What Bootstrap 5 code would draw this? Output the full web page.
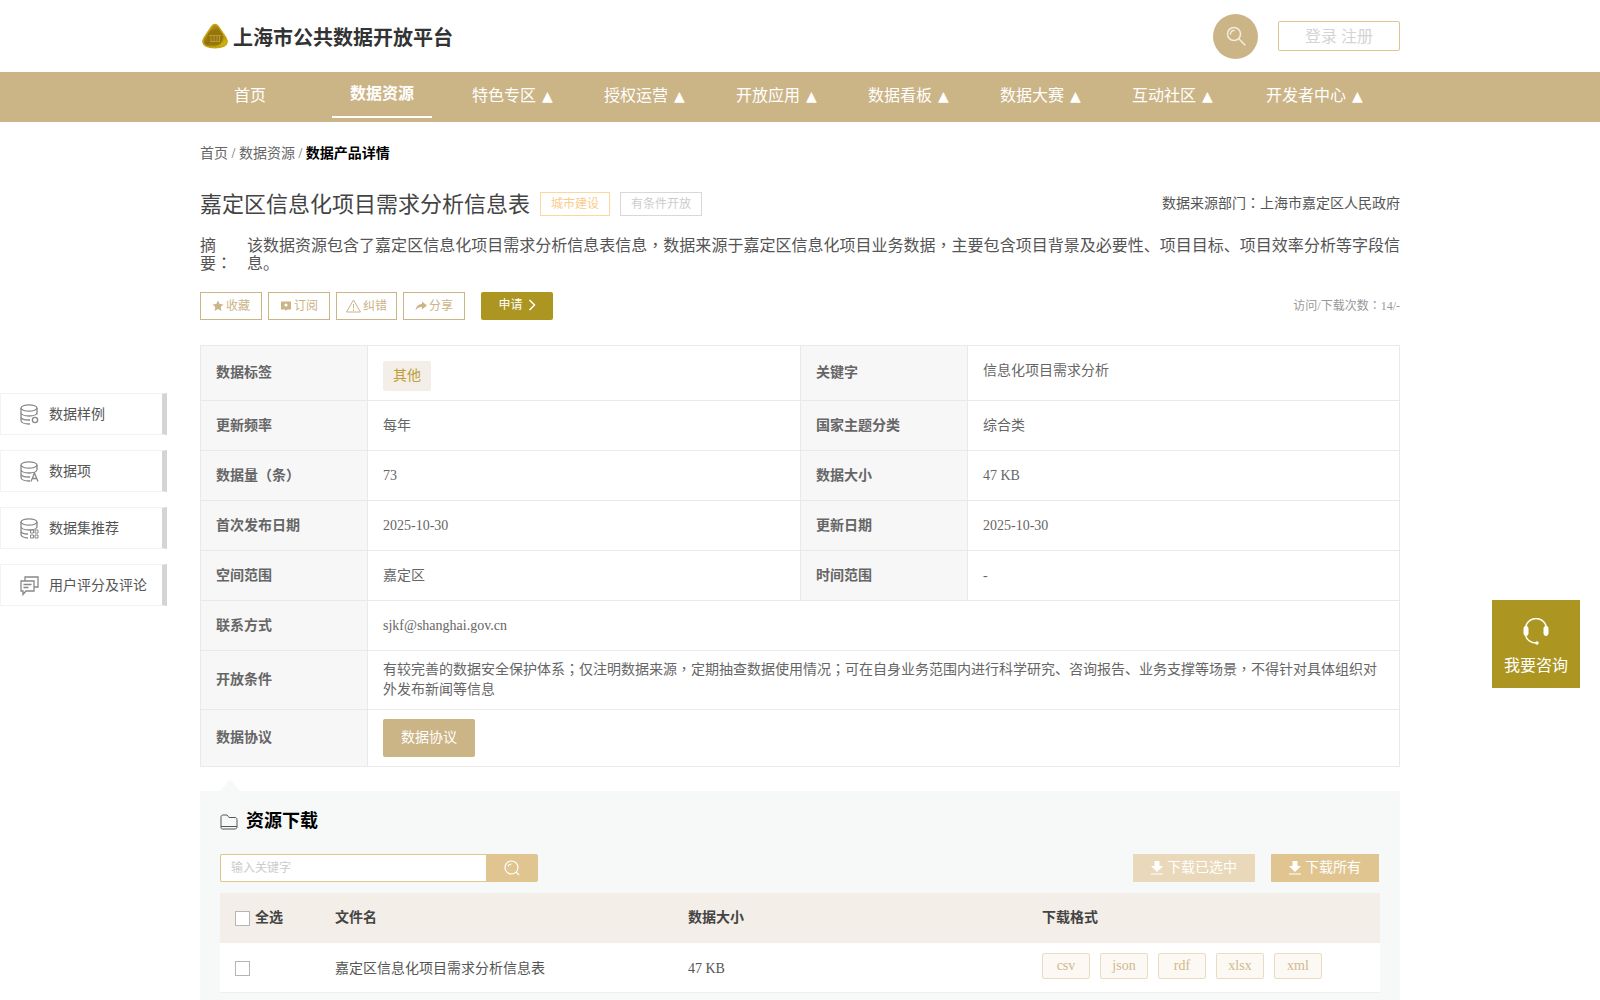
<!DOCTYPE html>
<html lang="zh">
<head>
<meta charset="utf-8">
<title>上海市公共数据开放平台</title>
<link href="https://cdn.jsdelivr.net/npm/bootstrap@5.3.0/dist/css/bootstrap.min.css" rel="stylesheet">
<style>
html,body{height:1000px;overflow:hidden}
body{font-family:"Liberation Serif","Noto Sans CJK SC",serif;font-size:14px;color:#666;background:#fff;line-height:1.4}
.pn{font-family:"Noto Sans CJK TC",serif;line-height:0}
.tri{font-family:"DejaVu Sans",sans-serif;font-size:14px;line-height:0}
.wrap-1200{width:1200px;margin:0 auto}
.top-head{height:72px}
.logo-mark{margin:0 4px 0 1px}
.brand-name{font-size:20px;font-weight:700;color:#333;padding-top:3px}
.search-disc{width:45px;height:45px;border-radius:50%;background:#cbb486}
.login-box{width:122px;height:30px;border:1px solid #e0c591;border-radius:2px;font-size:16px;color:#d4d4d4;margin-left:20px;padding-top:2px}
.main-nav{height:50px;background:#cbb486}
.main-nav .nav-cell{width:100px;margin-right:32px;height:50px;color:#fff;font-size:16px;white-space:nowrap;display:flex;align-items:center;justify-content:center;padding:0 3px 2px 0;gap:6px}
.main-nav .nav-cell.home{padding-right:0}
.main-nav .nav-cell.wide{width:120px;margin-right:0}
.main-nav .nav-cell.on{font-weight:700;border-bottom:2px solid #fff;height:46px;padding:1px 0 0}
.crumbs{padding-top:22px;height:64px;color:#666;line-height:20px}
.crumbs b{color:#000}
.title-row{height:36px}
.title-row h1{font-size:22px;font-weight:400;color:#444;margin:0;padding-top:2px}
.tag-a,.tag-b{height:24px;font-size:12px;padding:0 10px;display:flex;align-items:center;margin-left:10px}
.tag-a{border:1px solid #fdd6a0;color:#fbcb8b}
.tag-b{border:1px solid #d8d8d8;color:#ccc}
.src-dept{color:#555}
.summary{font-size:16px;line-height:18px;color:#555;margin-top:15px}
.summary .lbl{width:47px;flex:none}
.summary .txt{text-align:justify}
.act-row{margin-top:19px;height:28px}
.act-btn{width:62px;height:28px;border:1px solid #cbb486;color:#cbb486;font-size:12px;margin-right:6px;display:flex;align-items:center;justify-content:center;background:#fff;gap:2px}
.act-narrow{width:61px}
.apply-btn{width:72px;height:28px;background:#ac9621;color:#fff;font-size:12px;border-radius:2px;margin-left:10px;border:0;display:flex;align-items:center;justify-content:center;gap:5px;padding:0 0 2px}
.visit-count{font-size:12px;color:#999}
.info-tbl{width:1199px;margin:25px 0 0;border-collapse:collapse;table-layout:fixed;font-size:14px}
.info-tbl th,.info-tbl td{border:1px solid #e9e9e9;padding:0 15px;vertical-align:middle;color:#666}
.info-tbl th{background:#f7f7f7;font-weight:700}
.info-tbl td{line-height:20px}
.info-tbl td.lift{padding-bottom:4px}
.c-l{width:167px}.c-v{width:433px}.c-w{width:432px}
.h55{height:55px}.h50{height:50px}.h59{height:59px}.h57{height:57px}
.cat-chip{display:inline-block;background:#f3eee7;color:#bd9f36;border-radius:2px;padding:0 10px;line-height:30px;font-size:14px;margin-top:5px}
.proto-btn{display:inline-block;background:#cbb486;color:#fff;border-radius:2px;padding:0 18px;line-height:38px}
.dl-section{background:#f7f9f8;margin-top:24px;padding:0 20px;height:209px;position:relative}
.dl-section::before{content:"";position:absolute;left:20px;top:-12px;border:10px solid transparent;border-top:0;border-bottom:12px solid #f7f9f8}
.dl-title{height:63px;font-size:18px;font-weight:700;color:#000;gap:8px;padding-bottom:2px}
.kw-input{width:266px;height:28px;border:1px solid #e0c591;border-right:0;border-radius:2px 0 0 2px;background:#fff;color:#ccc;font-size:12px;padding-left:10px;display:flex;align-items:center}
.kw-btn{width:52px;height:28px;background:#e0c591;border-radius:0 2px 2px 0}
.dl-btn{height:28px;color:#fff;font-size:14px;display:flex;align-items:center;justify-content:center;gap:4px}
.dl-sel{width:122px;background:#e9d8b9;margin-right:16px}
.dl-all{width:108px;background:#e0c591;margin-right:1px}
.file-head,.file-row{display:grid;grid-template-columns:115px 353px 354px 1fr;align-items:center}
.file-head{height:50px;background:#f3eee7;margin-top:11px;font-weight:700;color:#444}
.file-row{height:50px;background:#fff;border-bottom:1px solid #f3eee7;color:#555}
.file-row>div:not(.fmt-set){padding-top:2px}
.fake-check{width:15px;height:15px;border:1px solid #b5b5b5;background:#fff;display:inline-block;margin-left:15px;margin-right:5px}
.fmt-set{padding-bottom:3px}
.fmt-chip{width:48px;height:26px;border:1px solid #eadcc0;background:#fcf9f4;border-radius:2px;color:#d2b88c;display:flex;align-items:center;justify-content:center;margin-right:10px}
.side-rail{position:absolute;left:0;top:393px;width:167px}
.side-item{height:42px;border:1px solid #f3f3f3;border-right:5px solid #d4d4d4;margin-bottom:15px;padding-left:19px;color:#555;gap:10px;background:#fff}
.side-item span{padding-top:2px}
.consult{position:absolute;left:1492px;top:600px;width:88px;height:88px;background:#ac9621;color:#fff;font-size:16px;padding-top:18px}
.consult-txt{margin-top:10px}
</style>
</head>
<body>
<div class="wrap-1200 top-head d-flex align-items-center justify-content-between">
  <div class="d-flex align-items-center">
    <svg class="logo-mark" width="28" height="28" viewBox="0 0 28 28"><defs><linearGradient id="g1" x1="0" y1="0" x2="1" y2="1"><stop offset="0" stop-color="#d6b01c"/><stop offset=".5" stop-color="#8d7010"/><stop offset="1" stop-color="#e8cf00"/></linearGradient></defs><path d="M14 2.500C16.500 2.500 17.500 4.500 19 7L25 16C27 19.500 26 22.500 23 24C20 25.500 17 25.700 14 25.700C11 25.700 8 25.500 5 24C2 22.500 1 19.500 3 16L9 7C10.500 4.500 11.500 2.500 14 2.500Z" fill="url(#g1)" stroke="#c9a514" stroke-width="1.500" stroke-linejoin="round"/><circle cx="14" cy="15.500" r="8" fill="#94750f"/><path d="M8 13.500H20M9 19.500H19M10 13.500V19.500M13 13.500V19.500M16 13.500V19.500M18.500 13.500V19.500" stroke="#c4a32e" fill="none" stroke-width=".8"/></svg>
    <span class="brand-name">上海市公共数据开放平台</span>
  </div>
  <div class="d-flex align-items-center">
    <div class="search-disc d-flex align-items-center justify-content-center">
      <svg width="22" height="22" viewBox="0 0 22 22" fill="none" stroke="#f4ecdc" stroke-width="1.500"><circle cx="9" cy="9" r="6.500"/><path d="M5.500 9A3.500 3.500 0 0 1 9 5.500M14 14L20 20" stroke-linecap="round"/></svg>
    </div>
    <div class="login-box d-flex align-items-center justify-content-center">登录 注册</div>
  </div>
</div>
<nav class="main-nav">
  <div class="wrap-1200 d-flex">
    <a class="nav-cell home text-decoration-none">首页</a>
    <a class="nav-cell text-decoration-none on">数据资源</a>
    <a class="nav-cell text-decoration-none">特色专区<span class="tri">▲</span></a>
    <a class="nav-cell text-decoration-none">授权运营<span class="tri">▲</span></a>
    <a class="nav-cell text-decoration-none">开放应用<span class="tri">▲</span></a>
    <a class="nav-cell text-decoration-none">数据看板<span class="tri">▲</span></a>
    <a class="nav-cell text-decoration-none">数据大赛<span class="tri">▲</span></a>
    <a class="nav-cell text-decoration-none">互动社区<span class="tri">▲</span></a>
    <a class="nav-cell text-decoration-none wide">开发者中心<span class="tri">▲</span></a>
  </div>
</nav>
<main class="wrap-1200">
  <div class="crumbs">首页 / 数据资源 / <b>数据产品详情</b></div>
  <div class="title-row d-flex align-items-center">
    <h1>嘉定区信息化项目需求分析信息表</h1>
    <span class="tag-a">城市建设</span><span class="tag-b">有条件开放</span>
    <span class="src-dept ms-auto">数据来源部门<span class="pn" lang="zh-TW">：</span>上海市嘉定区人民政府</span>
  </div>
  <div class="summary d-flex">
    <div class="lbl"><span>摘</span><span>要</span><span class="pn" lang="zh-TW">：</span></div>
    <div class="txt">该数据资源包含了嘉定区信息化项目需求分析信息表信息<span class="pn" lang="zh-TW">，</span>数据来源于嘉定区信息化项目业务数据<span class="pn" lang="zh-TW">，</span><span>主要包含项目背景及必要性、项目目标、项目效率分析等字段信</span><span>息。</span></div>
  </div>
  <div class="act-row d-flex align-items-center">
    <span class="act-btn"><svg width="12" height="12" viewBox="0 0 12 12"><path d="M6 .5L7.700 4 11.500 4.500 8.700 7.100 9.400 11 6 9.100 2.600 11 3.300 7.100 .5 4.500 4.300 4Z" fill="#cbb486"/></svg>收藏</span>
    <span class="act-btn"><svg width="12" height="12" viewBox="0 0 12 12"><path d="M1 1.500H11V9.500H7L6 11 5 9.500H1Z" fill="#cbb486"/><circle cx="6" cy="5" r="1.600" fill="#fff"/></svg>订阅</span>
    <span class="act-btn act-narrow"><svg width="15" height="14" viewBox="0 0 15 14" fill="none" stroke="#cbb486"><path d="M7.500 1L14.500 13H.5Z"/><path d="M7.500 5V9.500M7.500 10.500V12"/></svg>纠错</span>
    <span class="act-btn"><svg width="12" height="12" viewBox="0 0 12 12"><path d="M7 1.500L12 5.500 7 9.500V7C4 7 2 8 .5 10.500 1 7 3 4 7 4Z" fill="#cbb486"/></svg>分享</span>
    <button class="apply-btn">申请 <svg width="8" height="12" viewBox="0 0 8 12" fill="none" stroke="#fff" stroke-width="1.500"><path d="M1.500 1L6.500 6 1.500 11"/></svg></button>
    <span class="visit-count ms-auto">访问/下载次数<span class="pn" lang="zh-TW">：</span>14/-</span>
  </div>
  <table class="info-tbl">
    <colgroup><col class="c-l"><col class="c-v"><col class="c-l"><col class="c-w"></colgroup>
    <tr class="h55"><th>数据标签</th><td><span class="cat-chip">其他</span></td><th>关键字</th><td class="lift">信息化项目需求分析</td></tr>
    <tr class="h50"><th>更新频率</th><td>每年</td><th>国家主题分类</th><td>综合类</td></tr>
    <tr class="h50"><th>数据量（条）</th><td>73</td><th>数据大小</th><td>47 KB</td></tr>
    <tr class="h50"><th>首次发布日期</th><td>2025-10-30</td><th>更新日期</th><td>2025-10-30</td></tr>
    <tr class="h50"><th>空间范围</th><td>嘉定区</td><th>时间范围</th><td>-</td></tr>
    <tr class="h50"><th>联系方式</th><td colspan="3">sjkf@shanghai.gov.cn</td></tr>
    <tr class="h59"><th>开放条件</th><td colspan="3">有较完善的数据安全保护体系<span class="pn" lang="zh-TW">；</span>仅注明数据来源<span class="pn" lang="zh-TW">，</span>定期抽查数据使用情况<span class="pn" lang="zh-TW">；</span>可在自身业务范围内进行科学研究、咨询报告、业务支撑等场景<span class="pn" lang="zh-TW">，</span><span>不得针对具体组织对</span><span>外发布新闻等信息</span></td></tr>
    <tr class="h57"><th>数据协议</th><td colspan="3"><span class="proto-btn">数据协议</span></td></tr>
  </table>
  <section class="dl-section">
    <div class="dl-title d-flex align-items-center">
      <svg width="18" height="16" viewBox="0 0 18 16" fill="none" stroke="#555"><path d="M1 13.500V3C1 2 1.700 1 3 1H7L9 3.500H15C16.200 3.500 17 4.300 17 5.500V13C17 14.200 16.200 15 15 15H2.500C1.500 15 1 14.500 1 13.500ZM1 12.500H17"/></svg>
      <span>资源下载</span>
    </div>
    <div class="d-flex align-items-center">
      <div class="kw-input">输入关键字</div>
      <div class="kw-btn d-flex align-items-center justify-content-center"><svg width="16" height="16" viewBox="0 0 16 16" fill="none" stroke="#fff" stroke-width="1.200"><circle cx="7.500" cy="7.500" r="6.500"/><path d="M4 6.500C4.500 5 6 4 7.500 4M12 12L15 15"/></svg></div>
      <div class="dl-btn dl-sel ms-auto"><svg width="12" height="14" viewBox="0 0 12 14" fill="#fff"><path d="M3.500 0H8.500V5H12L6 11 0 5H3.500ZM0 12.500H12V13.500H0Z"/></svg>下载已选中</div>
      <div class="dl-btn dl-all"><svg width="12" height="14" viewBox="0 0 12 14" fill="#fff"><path d="M3.500 0H8.500V5H12L6 11 0 5H3.500ZM0 12.500H12V13.500H0Z"/></svg>下载所有</div>
    </div>
    <div class="file-head">
      <div class="d-flex align-items-center"><span class="fake-check"></span>全选</div>
      <div>文件名</div><div>数据大小</div><div>下载格式</div>
    </div>
    <div class="file-row">
      <div><span class="fake-check d-block"></span></div>
      <div>嘉定区信息化项目需求分析信息表</div><div>47 KB</div>
      <div class="d-flex fmt-set"><span class="fmt-chip">csv</span><span class="fmt-chip">json</span><span class="fmt-chip">rdf</span><span class="fmt-chip">xlsx</span><span class="fmt-chip">xml</span></div>
    </div>
  </section>
</main>
<aside class="side-rail">
  <div class="side-item d-flex align-items-center"><svg width="19" height="21" viewBox="0 0 19 21" fill="none" stroke="#888" stroke-width="1.300"><ellipse cx="9" cy="4" rx="8" ry="3.200"/><path d="M1 4V16.500C1 18.500 4.500 20 9 20H10M17 4V10.500M1 8.500C1 10.500 4.500 12 9 12S17 10.500 17 8.500M1 13C1 15 4.500 16 9 16H10"/><circle cx="15" cy="16" r="2.600"/></svg><span>数据样例</span></div>
  <div class="side-item d-flex align-items-center"><svg width="19" height="21" viewBox="0 0 19 21" fill="none" stroke="#888" stroke-width="1.300"><ellipse cx="9" cy="4" rx="8" ry="3.200"/><path d="M1 4V16.500C1 18.500 4.500 20 9 20H10M17 4V9M1 8.500C1 10.500 4.500 12 9 12S17 10.500 17 8.500M1 13C1 15 4.500 16 9 16H10M11 20.500L14.500 12 18 20.500M12.300 17.500H16.700"/></svg><span>数据项</span></div>
  <div class="side-item d-flex align-items-center"><svg width="19" height="21" viewBox="0 0 19 21" fill="none" stroke="#888" stroke-width="1.300"><ellipse cx="9" cy="4" rx="8" ry="3.200"/><path d="M1 4V16.500C1 18.500 4.500 20 8 20M17 4V9.500M1 8.500C1 10.500 4.500 12 9 12S17 10.500 17 8.500M1 13C1 15 4.500 16 8 16"/><path d="M10.500 12H13.500V15H10.500ZM15 12H18V15H15ZM10.500 17H13.500V20H10.500ZM15 17H18V20H15Z" stroke-width="1"/></svg><span>数据集推荐</span></div>
  <div class="side-item d-flex align-items-center"><svg width="19" height="21" viewBox="0 0 19 21" fill="none" stroke="#888" stroke-width="1.300"><path d="M1 6H14V16H6L3 19.500V16H1ZM5 6V2H18V12H14M3.500 9.500H11.500M3.500 12.500H8.500"/></svg><span>用户评分及评论</span></div>
</aside>
<aside class="consult d-flex flex-column align-items-center">
  <svg width="28" height="27" viewBox="0 0 28 27" fill="none" stroke="#fff" stroke-width="1.400"><path d="M3.500 11A10.500 10.500 0 0 1 24.500 11M3.500 17C4.500 22 9 25 14.500 25"/><rect x="1.500" y="8" width="5" height="10" rx="2.400" fill="#fff" stroke="none"/><rect x="21.500" y="8" width="5" height="10" rx="2.400" fill="#fff" stroke="none"/><circle cx="15" cy="25" r="1.700" fill="#fff" stroke="none"/></svg>
  <div class="consult-txt">我要咨询</div>
</aside>
<script src="https://cdn.jsdelivr.net/npm/bootstrap@5.3.0/dist/js/bootstrap.bundle.min.js"></script>
</body>
</html>
